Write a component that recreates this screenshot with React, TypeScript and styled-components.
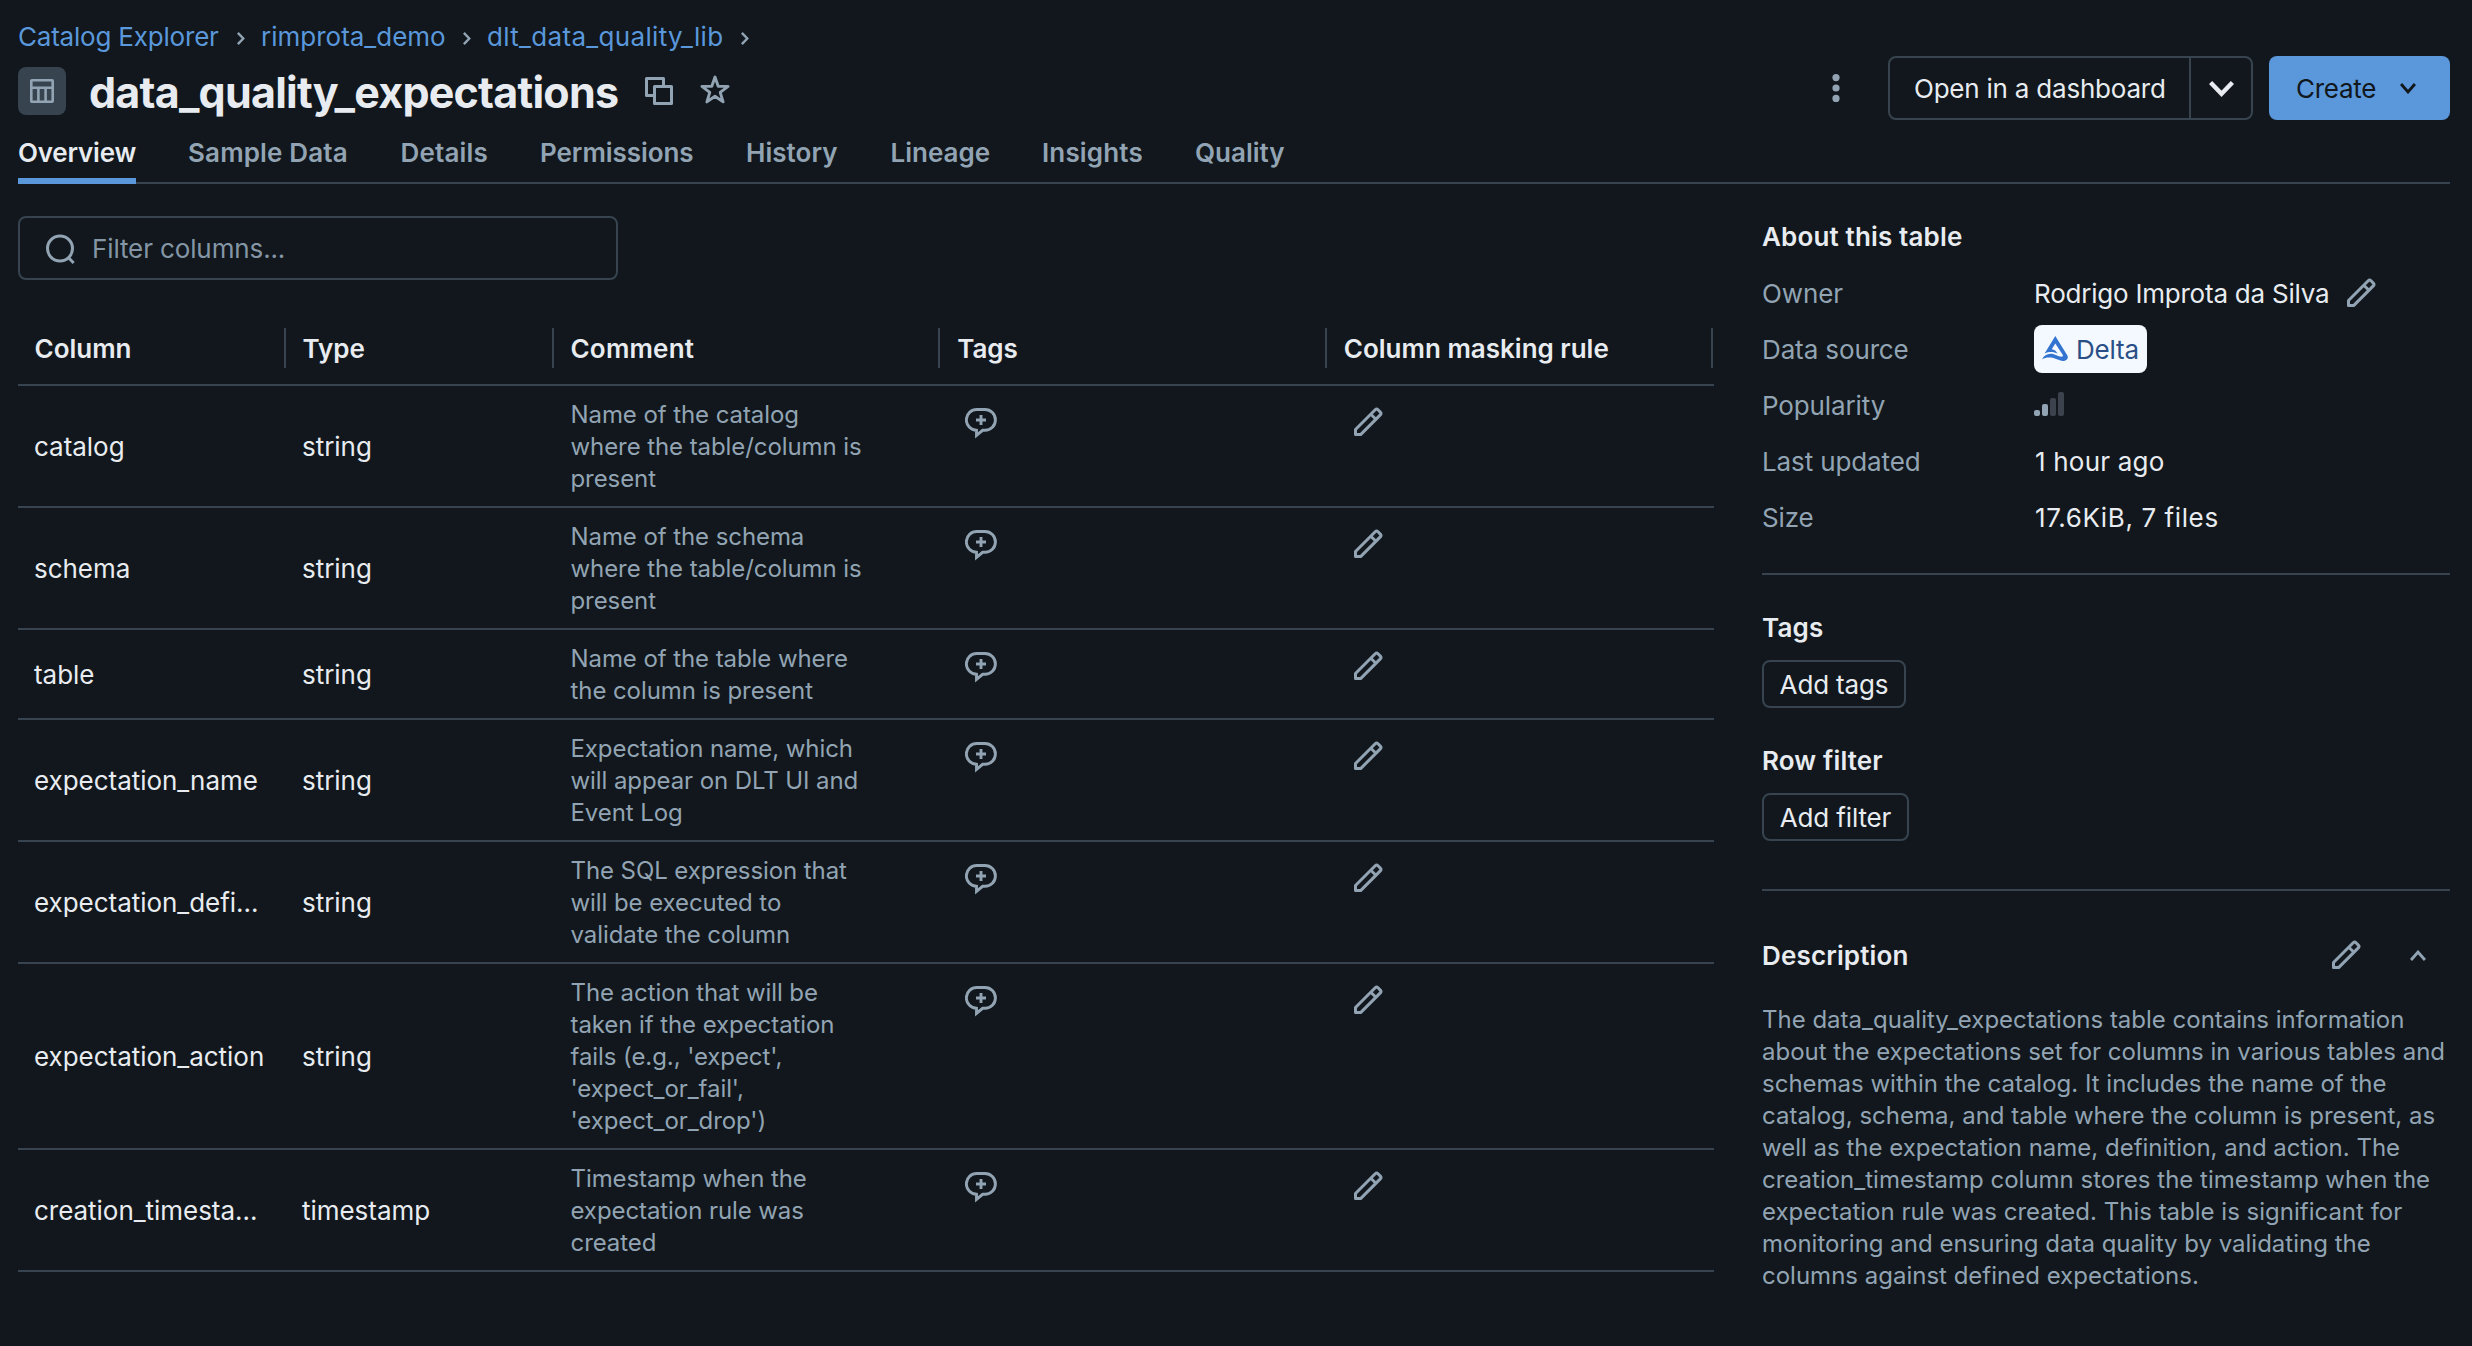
import React from 'react';
import styled, { createGlobalStyle } from 'styled-components';

const color = {
  bg: '#11171c',
  text: '#e8ecf0',
  muted: '#92a4b3',
  border: '#37444f',
  blue: '#5a97db',
};

const GlobalStyle = createGlobalStyle`
  *, *::before, *::after { box-sizing: border-box; }
  body {
    margin: 0;
    background: ${color.bg};
    color: ${color.text};
    font-family: Inter, 'Liberation Sans', sans-serif;
    font-size: 26px;
    -webkit-font-smoothing: antialiased;
  }
  button, input { font: inherit; color: inherit; }
  svg { display: block; flex: none; }
`;

const Page = styled.div`
  width: 100%;
  min-height: 1346px;
  padding: 0 22px 0 18px;
  background: ${color.bg};
`;

/* ---------- header ---------- */

const Header = styled.header`
  display: flex;
  justify-content: space-between;
  align-items: flex-start;
  height: 125px;
`;

const HeaderMain = styled.div`
  padding-top: 17px;
`;

const Breadcrumbs = styled.nav`
  display: flex;
  align-items: center;
  height: 40px;
`;

const Crumb = styled.a<{ $width: number; $tracking?: number }>`
  width: ${(p) => p.$width}px;
  color: ${color.blue};
  letter-spacing: ${(p) => p.$tracking ?? 0}px;
  line-height: 40px;
  white-space: nowrap;
`;

const CrumbArrow = styled.span`
  display: flex;
  justify-content: center;
  width: 40px;
  padding-top: 2px;
  color: ${color.muted};
`;

const TitleRow = styled.div`
  display: flex;
  align-items: center;
  height: 68px;
`;

const TableBadge = styled.span`
  display: grid;
  place-items: center;
  width: 48px;
  height: 48px;
  border-radius: 8px;
  background: ${color.border};
  color: ${color.muted};
`;

const Title = styled.h1`
  width: 531px;
  margin: 0 24px 0 23px;
  padding-top: 1px;
  font-size: 43px;
  font-weight: 650;
  line-height: 56px;
  letter-spacing: -0.77px;
  white-space: nowrap;
`;

const TitleTools = styled.div`
  display: flex;
  align-items: center;
  gap: 26px;
  padding-left: 1px;
  color: ${color.muted};
`;

const Actions = styled.div`
  display: flex;
  align-items: center;
  padding-top: 56px;
`;

const MoreButton = styled.button`
  display: grid;
  place-items: center;
  width: 32px;
  height: 64px;
  margin-right: 36px;
  padding: 0;
  border: 0;
  background: none;
  color: ${color.muted};
`;

const SplitButton = styled.div`
  display: flex;
  height: 64px;
  margin-right: 16px;
  border: 2px solid ${color.border};
  border-radius: 8px;
`;

const SplitMain = styled.button`
  width: 301px;
  padding: 0 0 0 24px;
  border: 0;
  border-right: 2px solid ${color.border};
  background: none;
  letter-spacing: -0.22px;
  text-align: left;
  white-space: nowrap;
`;

const SplitArrow = styled.button`
  display: grid;
  place-items: center;
  width: 60px;
  padding: 2px 0 0;
  border: 0;
  background: none;
`;

const CreateButton = styled.button`
  display: flex;
  align-items: center;
  justify-content: space-between;
  width: 181px;
  height: 64px;
  padding: 0 34px 0 27px;
  border: 0;
  border-radius: 8px;
  background: ${color.blue};
  color: ${color.bg};
  letter-spacing: -0.25px;
`;

/* ---------- tabs ---------- */

const Tabs = styled.nav`
  display: flex;
  gap: 52px;
  height: 59px;
  box-shadow: inset 0 -2px ${color.border};
`;

const Tab = styled.a<{ $width: number; $tracking: number; $active?: boolean }>`
  width: ${(p) => p.$width}px;
  padding-top: 1px;
  border-bottom: 6px solid ${(p) => (p.$active ? color.blue : 'transparent')};
  color: ${(p) => (p.$active ? color.text : color.muted)};
  font-weight: 600;
  line-height: 53px;
  letter-spacing: ${(p) => p.$tracking}px;
  white-space: nowrap;
`;

/* ---------- columns table ---------- */

const Body = styled.div`
  display: flex;
  gap: 48px;
`;

const Main = styled.main`
  width: 1696px;
  padding-top: 32px;
`;

const FilterBox = styled.label`
  display: flex;
  align-items: center;
  width: 600px;
  height: 64px;
  padding: 1px 0 0 24px;
  border: 2px solid ${color.border};
  border-radius: 8px;
  color: ${color.muted};
`;

const FilterInput = styled.input`
  flex: 1;
  margin-left: 16px;
  padding: 0;
  border: 0;
  outline: 0;
  background: none;
  letter-spacing: -0.12px;

  &::placeholder { color: #8496a5; opacity: 1; }
`;

const Table = styled.div`
  margin-top: 32px;
`;

const Row = styled.div`
  display: grid;
  grid-template-columns: 268px 268px 1fr 1fr 1fr;
  border-bottom: 2px solid ${color.border};
`;

const HeadRow = styled(Row)`
  align-items: center;
  height: 74px;
`;

const HeadCell = styled.div<{ $tracking?: number }>`
  height: 40px;
  margin-right: 0.5px;
  padding-left: 16.5px;
  border-right: 2px solid ${color.border};
  font-weight: 600;
  line-height: 42px;
  letter-spacing: ${(p) => p.$tracking ?? 0}px;
`;

const Cell = styled.div`
  align-self: center;
  padding: 2px 0 0 16px;
  line-height: 40px;
  letter-spacing: -0.03px;
  white-space: nowrap;
`;

const Comment = styled.div`
  padding: 13px 16px 11px 16.5px;
  color: ${color.muted};
  font-size: 24px;
  line-height: 32px;
  letter-spacing: -0.08px;
  white-space: pre;
`;

const IconCell = styled.div<{ $top: number }>`
  padding: ${(p) => p.$top}px 0 0 24.5px;
  color: ${color.muted};
`;

/* ---------- sidebar ---------- */

const Sidebar = styled.aside`
  width: 688px;
  padding-top: 32px;
`;

const Heading = styled.h2<{ $tracking?: number }>`
  height: 40px;
  margin: 0;
  font-size: 26px;
  font-weight: 600;
  line-height: 42px;
  letter-spacing: ${(p) => p.$tracking ?? 0.15}px;
`;

const Facts = styled.dl`
  display: grid;
  grid-template-columns: 271px 1fr;
  grid-auto-rows: 56px;
  align-items: center;
  margin: 9px 0 28px;
`;

const Term = styled.dt`
  color: ${color.muted};
  letter-spacing: -0.12px;
`;

const Value = styled.dd<{ $tracking?: number }>`
  display: flex;
  align-items: center;
  margin: 0;
  padding-left: 1px;
  letter-spacing: ${(p) => p.$tracking ?? 0}px;
`;

const FactText = styled.span`
  padding-left: 1px;
`;

const OwnerName = styled.span`
  width: 311px;
`;

const EditButton = styled.button`
  padding: 0;
  border: 0;
  background: none;
  color: ${color.muted};
`;

const DeltaTag = styled.span`
  display: flex;
  align-items: center;
  gap: 7px;
  width: 113px;
  height: 48px;
  padding-left: 8px;
  border-radius: 8px;
  background: #f3f9ff;
  color: #2a4f86;
  letter-spacing: -0.2px;
`;

const Bars = styled.span`
  display: flex;
  align-items: flex-end;
  gap: 2px;
  height: 24px;
  margin-bottom: 2px;
`;

const Bar = styled.span<{ $level: number; $on?: boolean }>`
  width: 6px;
  height: ${(p) => p.$level * 6}px;
  border-radius: 2px;
  background: ${(p) => (p.$on ? color.muted : '#3c434d')};
`;

const Rule = styled.hr`
  height: 2px;
  margin: 0;
  border: 0;
  background: ${color.border};
`;

const Section = styled.section`
  padding-top: 32px;

  &:last-of-type { padding-bottom: 48px; }
`;

const SmallButton = styled.button<{ $width: number }>`
  display: block;
  width: ${(p) => p.$width}px;
  height: 48px;
  margin-top: 13px;
  padding: 0;
  border: 2px solid ${color.border};
  border-radius: 8px;
  background: none;
  letter-spacing: -0.15px;
  white-space: nowrap;
`;

const DescriptionHead = styled.div`
  display: flex;
  align-items: center;
  height: 40px;
  margin-top: 44px;
  padding-right: 24px;
  color: ${color.muted};

  ${Heading} { flex: 1; color: ${color.text}; }
`;

const CollapseButton = styled(EditButton)`
  margin-left: 48px;
`;

const Description = styled.p`
  margin: 29px 0 0;
  color: ${color.muted};
  font-size: 24px;
  line-height: 32px;
  white-space: pre;
`;

/* ---------- icons ---------- */

const Chevron = ({ w, h, stroke, dir = 'down' }: { w: number; h: number; stroke: number; dir?: 'down' | 'up' | 'right' }) => {
  const o = stroke * 0.36;
  const points = {
    down: `${o},${o} ${w / 2},${h - stroke * 0.72} ${w - o},${o}`,
    up: `${o},${h - o} ${w / 2},${stroke * 0.72} ${w - o},${h - o}`,
    right: `${o},${o} ${w - stroke * 0.72},${h / 2} ${o},${h - o}`,
  }[dir];
  return (
    <svg width={w} height={h} viewBox={`0 0 ${w} ${h}`} fill="none" stroke="currentColor" strokeWidth={stroke}>
      <polyline points={points} />
    </svg>
  );
};

const TableIcon = () => (
  <svg width="24" height="24" viewBox="0 0 24 24" fill="none" stroke="currentColor" strokeWidth="2.6">
    <rect x="1.3" y="1.3" width="21.4" height="21.4" rx="0.6" />
    <path d="M1.2 8.8h21.600M8.400 8.800v14M15.600 8.800v14" />
  </svg>
);

const CopyIcon = () => (
  <svg width="28" height="28" viewBox="0 0 28 28" fill="none" stroke="currentColor" strokeWidth="3" strokeLinejoin="round">
    <path d="M9.5 18.5h-8v-17h17v8" />
    <rect x="9.5" y="9.5" width="17" height="17" />
  </svg>
);

const StarIcon = () => (
  <svg width="32" height="34" viewBox="0 0 32 34" fill="none" stroke="currentColor" strokeWidth="2.9" strokeLinejoin="round">
    <path d="M16 3l3.2 9.2 9.9.2-7.9 6 2.9 9.5-8.1-5.7-8.1 5.7 2.9-9.5-7.9-6 9.9-.2z" />
  </svg>
);

const SearchIcon = () => (
  <svg width="32" height="32" viewBox="0 0 32 32" fill="none" stroke="currentColor" strokeWidth="3">
    <circle cx="16" cy="15.5" r="12.5" />
    <path d="M24.3 24.5l5.4 5.5" />
  </svg>
);

const MoreIcon = () => (
  <svg width="8" height="28" viewBox="0 0 8 28" fill="currentColor">
    <circle cx="4" cy="3.6" r="3.6" />
    <circle cx="4" cy="14" r="3.6" />
    <circle cx="4" cy="24.4" r="3.6" />
  </svg>
);

const TagCommentIcon = () => (
  <svg width="32" height="31" viewBox="0 0 32 31" fill="none" stroke="currentColor" strokeWidth="2.9">
    <path d="M12 1.5h8a10.3 10.3 0 0 1 0 20.8h-2.4l-6.1 5.1v-5.1A10.3 10.3 0 0 1 12 1.5z" />
    <path d="M16 7v10M11 12h10" />
  </svg>
);

const PencilIcon = () => (
  <svg width="32" height="32" viewBox="0 0 32 32" fill="none" stroke="currentColor" strokeWidth="3" strokeLinejoin="round">
    <path d="M3.5 23.5L23.2 3.8a2 2 0 0 1 2.8 0l2.3 2.3a2 2 0 0 1 0 2.8L8.6 28.6H3.5z" />
    <path d="M18.8 8.2l5.1 5.1" />
  </svg>
);

const DeltaIcon = () => (
  <svg width="27" height="26" viewBox="0 0 27 26" fill="#3274d0">
    <path d="M13.3 0L25.4 19.5C26.7 22.1 24.9 24.6 21.8 24.9C16.6 25.2 13.6 22 9 21.6C5.500 21.200 2.500 21.800 0 23.400C1.600 19.800 4.800 17.700 8.600 17.700C13 17.700 16 20.600 19.500 20.700C21 20.700 21.300 19.800 20.700 18.800L13.300 7.500L9.800 13.200C12.300 13.600 14.300 15 15.600 17.600C12 15.700 7.500 15.300 2.600 17.400Z" />
  </svg>
);

/* ---------- data ---------- */

const tabs = [
  { label: 'Overview', width: 118, tracking: -0.2 },
  { label: 'Sample Data', width: 160.5, tracking: 0.15 },
  { label: 'Details', width: 87.5, tracking: 0.15 },
  { label: 'Permissions', width: 154, tracking: -0.05 },
  { label: 'History', width: 92.5, tracking: 0.05 },
  { label: 'Lineage', width: 99.5, tracking: 0 },
  { label: 'Insights', width: 101, tracking: 0.15 },
  { label: 'Quality', width: 90, tracking: 0 },
];

const columns = [
  { name: 'catalog', type: 'string', comment: 'Name of the catalog\nwhere the table/column is\npresent' },
  { name: 'schema', type: 'string', comment: 'Name of the schema\nwhere the table/column is\npresent' },
  { name: 'table', type: 'string', comment: 'Name of the table where\nthe column is present' },
  { name: 'expectation_name', type: 'string', comment: 'Expectation name, which\nwill appear on DLT UI and\nEvent Log' },
  { name: 'expectation_defi...', type: 'string', comment: 'The SQL expression that\nwill be executed to\nvalidate the column' },
  {
    name: 'expectation_action',
    type: 'string',
    comment: "The action that will be\ntaken if the expectation\nfails (e.g., 'expect',\n'expect_or_fail',\n'expect_or_drop')",
  },
  { name: 'creation_timesta...', type: 'timestamp', comment: 'Timestamp when the\nexpectation rule was\ncreated' },
];

const description = `The data_quality_expectations table contains information
about the expectations set for columns in various tables and
schemas within the catalog. It includes the name of the
catalog, schema, and table where the column is present, as
well as the expectation name, definition, and action. The
creation_timestamp column stores the timestamp when the
expectation rule was created. This table is significant for
monitoring and ensuring data quality by validating the
columns against defined expectations.`;

export default function App() {
  return (
    <Page>
      <GlobalStyle />
      <Header>
        <HeaderMain>
          <Breadcrumbs>
            <Crumb $width={203} $tracking={-0.2}>Catalog Explorer</Crumb>
            <CrumbArrow><Chevron w={8} h={13} stroke={2.4} dir="right" /></CrumbArrow>
            <Crumb $width={186}>rimprota_demo</Crumb>
            <CrumbArrow><Chevron w={8} h={13} stroke={2.4} dir="right" /></CrumbArrow>
            <Crumb $width={238} $tracking={0.33}>dlt_data_quality_lib</Crumb>
            <CrumbArrow><Chevron w={8} h={13} stroke={2.4} dir="right" /></CrumbArrow>
          </Breadcrumbs>
          <TitleRow>
            <TableBadge><TableIcon /></TableBadge>
            <Title>data_quality_expectations</Title>
            <TitleTools>
              <CopyIcon />
              <StarIcon />
            </TitleTools>
          </TitleRow>
        </HeaderMain>
        <Actions>
          <MoreButton><MoreIcon /></MoreButton>
          <SplitButton>
            <SplitMain>Open in a dashboard</SplitMain>
            <SplitArrow><Chevron w={25} h={16} stroke={4.4} /></SplitArrow>
          </SplitButton>
          <CreateButton>
            Create
            <Chevron w={16} h={11} stroke={2.9} />
          </CreateButton>
        </Actions>
      </Header>

      <Tabs>
        {tabs.map((t, i) => (
          <Tab key={t.label} $width={t.width} $tracking={t.tracking} $active={i === 0}>{t.label}</Tab>
        ))}
      </Tabs>

      <Body>
        <Main>
          <FilterBox>
            <SearchIcon />
            <FilterInput placeholder="Filter columns..." />
          </FilterBox>
          <Table>
            <HeadRow>
              <HeadCell>Column</HeadCell>
              <HeadCell>Type</HeadCell>
              <HeadCell $tracking={0.2}>Comment</HeadCell>
              <HeadCell>Tags</HeadCell>
              <HeadCell>Column masking rule</HeadCell>
            </HeadRow>
            {columns.map((c) => (
              <Row key={c.name}>
                <Cell>{c.name}</Cell>
                <Cell>{c.type}</Cell>
                <Comment>{c.comment}</Comment>
                <IconCell $top={22}><TagCommentIcon /></IconCell>
                <IconCell $top={20}><PencilIcon /></IconCell>
              </Row>
            ))}
          </Table>
        </Main>

        <Sidebar>
          <Heading>About this table</Heading>
          <Facts>
            <Term>Owner</Term>
            <Value $tracking={-0.22}>
              <OwnerName>Rodrigo Improta da Silva</OwnerName>
              <EditButton><PencilIcon /></EditButton>
            </Value>
            <Term>Data source</Term>
            <Value><DeltaTag><DeltaIcon />Delta</DeltaTag></Value>
            <Term>Popularity</Term>
            <Value>
              <Bars>
                <Bar $level={1} $on />
                <Bar $level={2} $on />
                <Bar $level={3} />
                <Bar $level={4} />
              </Bars>
            </Value>
            <Term>Last updated</Term>
            <Value $tracking={0.2}><FactText>1 hour ago</FactText></Value>
            <Term>Size</Term>
            <Value $tracking={0.6}><FactText>17.6KiB, 7 files</FactText></Value>
          </Facts>
          <Rule />
          <Section>
            <Heading>Tags</Heading>
            <SmallButton $width={144}>Add tags</SmallButton>
          </Section>
          <Section>
            <Heading>Row filter</Heading>
            <SmallButton $width={147}>Add filter</SmallButton>
          </Section>
          <Rule />
          <DescriptionHead>
            <Heading>Description</Heading>
            <EditButton><PencilIcon /></EditButton>
            <CollapseButton><Chevron w={16} h={11} stroke={2.9} dir="up" /></CollapseButton>
          </DescriptionHead>
          <Description>{description}</Description>
        </Sidebar>
      </Body>
    </Page>
  );
}
